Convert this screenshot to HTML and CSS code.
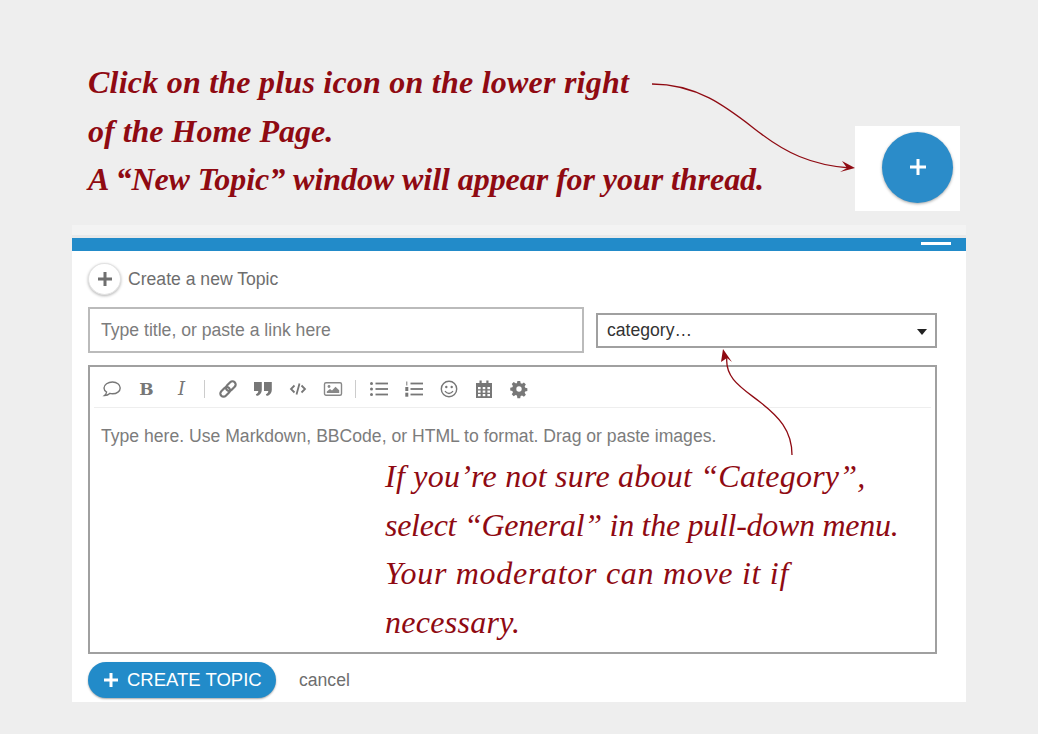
FILE: index.html
```html
<!DOCTYPE html>
<html lang="en">
<head>
<meta charset="utf-8">
<title>Create a new Topic</title>
<link rel="stylesheet" href="styles.css">
</head>
<body>
<div class="page">
  <header class="intro">
    <p class="note-main"><span class="main-1">Click on the plus icon on the lower right</span><span class="main-2">of the Home Page.</span><span class="main-3">A “New Topic” window will appear for your thread.</span></p>
    <div class="fab-shot"><span class="fab"><svg viewBox="0 0 18 18" width="18" height="18"><path d="M9 1v16M1 9h16" stroke="#fff" stroke-width="3" fill="none"/></svg></span></div>
  </header>
  <section class="panel">
    <div class="strip"></div>
    <div class="bar"><span class="dash"></span></div>
    <div class="panel-body">
      <div class="title-row">
        <span class="round-plus"><svg viewBox="0 0 16 16" width="16" height="16"><path d="M8 1v14M1 8h14" stroke="#6f6f6f" stroke-width="3" fill="none"/></svg></span>
        <span class="title-text">Create a new Topic</span>
      </div>
      <div class="fields">
        <div class="title-input">Type title, or paste a link here</div>
        <div class="select"><span>category…</span><i class="caret"></i></div>
      </div>
      <div class="editor">
        <div class="toolbar">
          <span class="tool"><svg viewBox="0 0 20 20" width="20" height="20"><path d="M10.500 3c4.300 0 7.700 2.600 7.700 5.900s-3.400 5.900-7.700 5.900c-1 0-1.900-.1-2.700-.4-1.300 1.200-3 2-5.300 2.100 1.200-1 1.900-2.200 2.100-3.500-1.600-1-2.600-2.500-2.600-4.100C2 5.600 6 3 10.500 3z" fill="none" stroke="#777" stroke-width="1.400"/></svg></span>
          <span class="tool glyph-b">B</span>
          <span class="tool glyph-i">I</span>
          <span class="sep"></span>
          <span class="tool"><svg viewBox="0 0 20 20" width="20" height="20"><g transform="rotate(-45 10 10)" fill="none" stroke="#777" stroke-width="2.200"><rect x="0.500" y="6.800" width="11" height="6.400" rx="3.200"/><rect x="8.500" y="6.800" width="11" height="6.400" rx="3.200"/></g></svg></span>
          <span class="tool"><svg viewBox="0 0 20 20" width="20" height="20"><path d="M1 3h7.800v8c0 3-1.800 5.300-5 6l-1-1.800c1.600-.6 2.400-1.500 2.500-3.200H1zM11 3h7.800v8c0 3-1.800 5.300-5 6l-1-1.800c1.600-.6 2.400-1.500 2.500-3.200H11z" fill="#777"/></svg></span>
          <span class="tool"><svg viewBox="0 0 20 20" width="20" height="20"><g fill="none" stroke="#777" stroke-width="1.800"><path d="M6.500 6.500L3 10l3.500 3.500M13.500 6.500L17 10l-3.500 3.500M11.500 4.500l-3 11"/></g></svg></span>
          <span class="tool"><svg viewBox="0 0 20 20" width="20" height="20"><rect x="1.500" y="3.700" width="17" height="12.600" rx="1.500" fill="none" stroke="#888" stroke-width="1.400"/><circle cx="6" cy="7.500" r="1.400" fill="#888"/><path d="M3.800 14v-1.500L7 10l2 1.500 3.500-3.700 3.700 3.500V14z" fill="#888"/></svg></span>
          <span class="sep"></span>
          <span class="tool"><svg viewBox="0 0 20 20" width="20" height="20"><g fill="#777"><circle cx="2.500" cy="4.500" r="1.500"/><circle cx="2.500" cy="10" r="1.500"/><circle cx="2.500" cy="15.500" r="1.500"/><rect x="6.500" y="3.600" width="12.500" height="1.800"/><rect x="6.500" y="9.100" width="12.500" height="1.800"/><rect x="6.500" y="14.600" width="12.500" height="1.800"/></g></svg></span>
          <span class="tool"><svg viewBox="0 0 20 20" width="20" height="20"><g fill="#777"><rect x="6.500" y="3.600" width="12.500" height="1.800"/><rect x="6.500" y="9.100" width="12.500" height="1.800"/><rect x="6.500" y="14.600" width="12.500" height="1.800"/><rect x="2.300" y="2.500" width="1" height="4"/><rect x="1.300" y="8" width="3" height="4"/><rect x="1.300" y="13.700" width="3" height="4"/></g></svg></span>
          <span class="tool"><svg viewBox="0 0 20 20" width="20" height="20"><circle cx="10" cy="10" r="7.700" fill="none" stroke="#777" stroke-width="1.400"/><circle cx="7.300" cy="8" r="1.200" fill="#777"/><circle cx="12.700" cy="8" r="1.200" fill="#777"/><path d="M6 12c1 1.800 2.400 2.500 4 2.500s3-.7 4-2.500" fill="none" stroke="#777" stroke-width="1.300"/></svg></span>
          <span class="tool"><svg viewBox="0 0 20 20" width="20" height="20"><path d="M2 4h3.500V1.500h2.200V4h4.600V1.500h2.200V4H18v15H2z" fill="#777"/><g fill="#fff"><rect x="4" y="8" width="2.600" height="2.200"/><rect x="8.700" y="8" width="2.600" height="2.200"/><rect x="13.400" y="8" width="2.600" height="2.200"/><rect x="4" y="11.500" width="2.600" height="2.200"/><rect x="8.700" y="11.500" width="2.600" height="2.200"/><rect x="13.400" y="11.500" width="2.600" height="2.200"/><rect x="4" y="15" width="2.600" height="2.200"/><rect x="8.700" y="15" width="2.600" height="2.200"/><rect x="13.400" y="15" width="2.600" height="2.200"/></g></svg></span>
          <span class="tool"><svg viewBox="0 0 20 20" width="20" height="20"><path d="M8.500 2h3l.5 2.300 1.500.6 2-1.300 2.100 2.100-1.300 2 .6 1.500 2.300.5v3l-2.300.5-.6 1.500 1.300 2-2.100 2.100-2-1.300-1.500.6-.5 2.300h-3L8 17.600l-1.500-.6-2 1.300-2.100-2.100 1.300-2-.6-1.500L.8 12.200v-3l2.300-.5.6-1.500-1.300-2 2.100-2.100 2 1.300L8 4.300z" transform="translate(.5 .2) scale(.93)" fill="#777"/><circle cx="10" cy="10" r="2.700" fill="#fff"/></svg></span>
        </div>
        <div class="editor-text">Type here. Use Markdown, BBCode, or HTML to format. Drag or paste images.</div>
      </div>
      <div class="actions">
        <span class="create"><svg viewBox="0 0 16 16" width="16" height="16"><path d="M8 1v14M1 8h14" stroke="#fff" stroke-width="3" fill="none"/></svg>CREATE TOPIC</span>
        <span class="cancel">cancel</span>
      </div>
    </div>
  </section>
  <p class="note-over"><span class="over-1">If you’re not sure about “Category”,</span><span class="over-2">select “General” in the pull-down menu.</span><span class="over-3">Your moderator can move it if</span><span class="over-4">necessary.</span></p>
  <svg class="arrows" viewBox="0 0 1038 734" width="1038" height="734">
    <g fill="none" stroke="#8f0a12" stroke-width="1.300">
      <path d="M652 84C700 84 730 110 760 133C785 152 810 165 850 168"/>
      <path d="M792 455C792 430 778 416 760 402C742 388 724 378 727 356"/>
    </g>
    <path d="M855 168L842 161L847 168L840 172Z" fill="#8f0a12"/>
    <path d="M723 349L721 362L727 358L732 362Z" fill="#8f0a12"/>
  </svg>
</div>
</body>
</html>
```
FILE: styles.css
```css
* { box-sizing: border-box; }
html, body { margin: 0; padding: 0; }
body { background: #eeeeee; font-family: "Liberation Sans", Arial, sans-serif; }
.page { position: relative; width: 1038px; height: 734px; overflow: hidden; }
.intro { height: 225px; padding: 0 78px 0 88px; display: flex; justify-content: space-between; align-items: flex-start; }
.note-main { margin: 58px 0 0; font: italic bold 32px/48.5px "Liberation Serif", serif; color: #8f0a12; white-space: nowrap; }
.note-main span, .note-over span { display: block; }
.main-1 { letter-spacing: .23px; }
.main-3 { letter-spacing: -.06px; }
.fab-shot { width: 105px; height: 85px; margin-top: 126px; background: #fff; display: flex; align-items: center; justify-content: flex-end; padding: 0 7px 3px 0; }
.fab { width: 71px; height: 71px; border-radius: 50%; background: #2b8cc9; box-shadow: 0 1px 3px rgba(0,0,0,.35); display: flex; align-items: center; justify-content: center; }
.panel { width: 894px; height: 477px; margin-left: 72px; background: #fff; display: flex; flex-direction: column; }
.strip { height: 13px; background: #f3f3f3; border-bottom: 3px solid #e9e9e9; }
.bar { height: 13px; background: #228bc9; display: flex; justify-content: flex-end; padding: 4px 15px 0 0; }
.dash { width: 30px; height: 3px; background: #fff; }
.panel-body { flex: 1; padding: 12px 29px 0 16px; background: #fff; }
.title-row { display: flex; align-items: center; gap: 7px; height: 32px; margin-bottom: 12px; }
.round-plus { width: 33px; height: 32px; border-radius: 50%; background: #fff; border: 1px solid #e2e2e2; box-shadow: 0 1px 3px rgba(0,0,0,.3); display: flex; align-items: center; justify-content: center; }
.title-text { font-size: 17.6px; color: #6e6e6e; }
.fields { display: flex; align-items: center; gap: 12px; height: 46px; margin-bottom: 12px; }
.title-input { width: 496px; height: 46px; border: 2px solid #bbb; padding: 0 11px; font-size: 17.6px; line-height: 42px; color: #7c7c7c; }
.select { width: 341px; height: 35px; margin-top: 1px; border: 2px solid #a0a0a0; padding: 0 8px 0 9px; display: flex; align-items: center; justify-content: space-between; font-size: 17.6px; color: #333; }
.caret { width: 0; height: 0; border-left: 5.500px solid transparent; border-right: 5.500px solid transparent; border-top: 6px solid #222; margin-top: 3px; }
.editor { width: 849px; height: 289px; border: 2px solid #a0a0a0; padding: 0 4px; }
.toolbar { height: 41px; display: flex; align-items: center; padding-top: 3px; border-bottom: 1px solid #eee; margin-bottom: 16px; }
.tool { width: 35px; height: 24px; flex: none; display: flex; align-items: center; justify-content: center; color: #777; }
.glyph-b { font: bold 17px "DejaVu Serif", serif; }
.glyph-i { font: italic 18px "DejaVu Serif", serif; }
.sep { width: 11px; height: 18px; flex: none; background: linear-gradient(#ccc, #ccc) center / 1px 100% no-repeat; }
.editor-text { padding-left: 7px; font-size: 17.6px; line-height: 24px; color: #7c7c7c; }
.actions { display: flex; align-items: center; gap: 23px; margin-top: 8px; }
.create { width: 188px; height: 36px; border-radius: 18px; background: #228bc9; box-shadow: 0 1px 2px rgba(0,0,0,.35); display: flex; align-items: center; gap: 8px; padding-left: 15px; color: #fff; font-size: 18.5px; }
.cancel { font-size: 17.6px; color: #6e6e6e; }
.note-over { position: absolute; left: 385px; top: 452px; margin: 0; font: italic 32px/48.500px "Liberation Serif", serif; color: #8f0a12; white-space: nowrap; }
.over-1 { letter-spacing: .23px; }
.over-2 { letter-spacing: -.28px; }
.over-3 { letter-spacing: .7px; }
.over-4 { letter-spacing: .3px; }
.arrows { position: absolute; left: 0; top: 0; pointer-events: none; }
```
